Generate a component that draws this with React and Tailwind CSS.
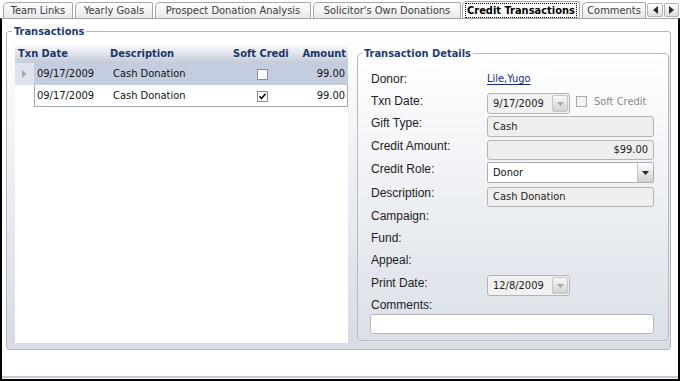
import React from "react";

const TAH = "font-['DejaVu_Sans_Condensed','DejaVu_Sans',sans-serif]";
const ARI = "font-['Liberation_Sans',Arial,sans-serif]";

function Tab({ cls, children }) {
  return (
    <div
      className={`${cls} h-[16px] border border-b-0 border-[#a7a7a7] rounded-tl-[5px] rounded-tr-[2px] bg-linear-to-b from-white to-[#e8e8e8] flex items-center justify-center text-[#3b3b3b] whitespace-nowrap leading-[13px]`}
    >
      {children}
    </div>
  );
}

function Tabs() {
  return (
    <div className="h-[18px] flex items-end">
      <Tab cls="ml-[3px] w-[70px]">Team Links</Tab>
      <Tab cls="ml-[2px] w-[78px]">Yearly Goals</Tab>
      <Tab cls="ml-[2px] w-[156px]">Prospect Donation Analysis</Tab>
      <Tab cls="ml-[2px] w-[148px]">Solicitor's Own Donations</Tab>
      <div className="ml-[1px] w-[118px] h-[17px] border border-b-0 border-[#a7a7a7] rounded-tl-[5px] rounded-tr-[2px] bg-white flex items-center justify-center">
        <span className="border border-dotted border-black px-[1px] leading-[13px] font-bold text-black whitespace-nowrap">
          Credit Transactions
        </span>
      </div>
      <Tab cls="ml-[2px] w-[64px]">Comments</Tab>
      <div className="ml-[1px] mb-[1px] w-[16px] h-[14px] border border-[#b3b3b3] rounded-[2px] bg-linear-to-b from-white to-[#dedede] flex items-center justify-center">
        <svg width="5" height="8" viewBox="0 0 5 8"><path d="M5 0 L0 4 L5 8 Z" fill="#2a2a2a" /></svg>
      </div>
      <div className="ml-[1px] mb-[1px] w-[15px] h-[14px] border border-[#b3b3b3] rounded-[2px] bg-linear-to-b from-white to-[#dedede] flex items-center justify-center">
        <svg width="5" height="8" viewBox="0 0 5 8"><path d="M0 0 L5 4 L0 8 Z" fill="#2a2a2a" /></svg>
      </div>
    </div>
  );
}

function CheckBox({ checked }) {
  return (
    <div className="w-[11px] h-[11px] border border-[#8d8d8d] bg-white flex items-center justify-center">
      {checked && (
        <svg width="9" height="9" viewBox="0 0 9 9">
          <path d="M1.5 4.2 L3.5 6.5 L7.5 1.8" fill="none" stroke="#111" strokeWidth="1.6" />
        </svg>
      )}
    </div>
  );
}

function Grid() {
  return (
    <div className="w-[333px] h-[298px] bg-white flex flex-col shrink-0">
      <div className="h-[18px] flex items-center bg-linear-to-b from-[#f8f9fb] to-[#c3cbd9] font-bold text-[#1d3566] whitespace-nowrap">
        <div className="w-[95px] pl-[3px]">Txn Date</div>
        <div className="w-[120px]">Description</div>
        <div className="w-[64px] pl-[3px] overflow-hidden">Soft Credi</div>
        <div className="flex-1 text-right pr-[2px]">Amount</div>
      </div>
      <div className="h-[22px] flex">
        <div className="w-[19px] bg-[#dfe3eb] flex items-center justify-center">
          <svg width="5" height="8" viewBox="0 0 5 8"><path d="M0 0 L4.5 4 L0 8 Z" fill="#a3aab4" /></svg>
        </div>
        <div className="flex-1 flex items-center bg-[#c4cde0] text-[#111]">
          <div className="w-[76px] pl-[3px]">09/17/2009</div>
          <div className="w-[120px] pl-[3px]">Cash Donation</div>
          <div className="w-[64px] flex justify-center"><CheckBox /></div>
          <div className="flex-1 text-right pr-[3px]">99.00</div>
        </div>
      </div>
      <div className="h-[22px] flex">
        <div className="w-[19px]" />
        <div className="flex-1 flex items-center text-[#111] shadow-[inset_1px_0_0_#a3a9b1,inset_-1px_0_0_#a3a9b1,inset_0_-1px_0_#a3a9b1]">
          <div className="w-[76px] pl-[3px]">09/17/2009</div>
          <div className="w-[120px] pl-[3px]">Cash Donation</div>
          <div className="w-[64px] flex justify-center"><CheckBox checked /></div>
          <div className="flex-1 text-right pr-[3px]">99.00</div>
        </div>
      </div>
    </div>
  );
}

function DateBox({ value }) {
  return (
    <div className={`w-[83px] h-[21px] border border-[#b4b4b4] rounded-[3px] bg-[#f1f1f1] flex items-center ${TAH} text-[11px] text-[#1b1b1b]`}>
      <div className="flex-1 pl-[5px]">{value}</div>
      <div className="w-[16px] h-[17px] mr-[1px] rounded-[2px] border border-[#c6c6c6] bg-linear-to-b from-[#f7f7f7] to-[#d2d2d2] flex items-center justify-center">
        <svg width="7" height="4" viewBox="0 0 7 4"><path d="M0 0 L7 0 L3.5 4 Z" fill="#a9a9a9" /></svg>
      </div>
    </div>
  );
}

function GreyBox({ children, right, h }) {
  return (
    <div className={`w-[167px] ${h} border border-[#b4b4b4] rounded-[3px] bg-[#efefef] flex items-center ${right ? "justify-end pr-[5px]" : "pl-[5px]"} ${TAH} text-[11px] text-[#1b1b1b]`}>
      {children}
    </div>
  );
}

function Details() {
  return (
    <fieldset className="ml-[9px] mt-[2px] w-[312px] h-[294px] min-w-0 border border-[#b6bbc3] rounded-[4px] bg-linear-to-b from-white to-[#dbe0e8] shadow-[1px_1px_0_#e4e7eb]">
      <legend className="ml-[4px] px-[2px] leading-[13px] font-bold text-[#1f3c72]">Transaction Details</legend>
      <div className={`pl-[13px] pt-[10px] flex flex-col ${ARI} text-[12px] leading-[14px] text-[#1c1c1c]`}>
        <div className="h-[23px] flex items-start">
          <div className="w-[116px] mt-[2px]">Donor:</div>
          <div className={`mt-[2px] ${TAH} text-[11px] text-[#1c2a80] underline underline-offset-[2px]`}>Lile,Yugo</div>
        </div>
        <div className="h-[23px] flex items-start">
          <div className="w-[116px] mt-[1px]">Txn Date:</div>
          <DateBox value="9/17/2009" />
          <div className="ml-[6px] mt-[3px] w-[11px] h-[11px] border border-[#a9a9a9] bg-[#f4f4f4]" />
          <div className={`ml-[7px] mt-[2px] ${TAH} text-[11px] text-[#8a8a8a]`}>Soft Credit</div>
        </div>
        <div className="h-[24px] flex items-start">
          <div className="w-[116px]">Gift Type:</div>
          <GreyBox h="h-[21px]">Cash</GreyBox>
        </div>
        <div className="h-[22px] flex items-start">
          <div className="w-[116px] -mt-[1px]">Credit Amount:</div>
          <GreyBox h="h-[20px]" right>$99.00</GreyBox>
        </div>
        <div className="h-[25px] flex items-start">
          <div className="w-[116px]">Credit Role:</div>
          <div className={`w-[167px] h-[21px] border border-[#abadb3] rounded-[2px] bg-white flex items-stretch ${TAH} text-[11px] text-[#111]`}>
            <div className="flex-1 flex items-center pl-[5px]">Donor</div>
            <div className="w-[16px] border-l border-[#c3c3c3] bg-linear-to-b from-white to-[#cfcfcf] flex items-center justify-center">
              <svg width="7" height="4" viewBox="0 0 7 4"><path d="M0 0 L7 0 L3.5 4 Z" fill="#222" /></svg>
            </div>
          </div>
        </div>
        <div className="h-[22px] flex items-start">
          <div className="w-[116px] -mt-[1px]">Description:</div>
          <GreyBox h="h-[20px]">Cash Donation</GreyBox>
        </div>
        <div className="h-[22px]">Campaign:</div>
        <div className="h-[22px]">Fund:</div>
        <div className="h-[22px]">Appeal:</div>
        <div className="h-[23px] flex items-start">
          <div className="w-[116px] mt-[1px]">Print Date:</div>
          <DateBox value="12/8/2009" />
        </div>
        <div className="h-[16px]">Comments:</div>
        <div className="-ml-[1px] w-[284px] h-[20px] border border-[#b5b5b5] rounded-[3px] bg-white" />
      </div>
    </fieldset>
  );
}

export default function App() {
  return (
    <div className={`w-[680px] h-[381px] bg-white flex flex-col overflow-hidden ${TAH} text-[11px] text-[#1b1b1b]`}>
      <Tabs />
      <div className="flex-1 flex flex-col border-x-2 border-b-2 border-black border-t border-t-[#a6a6a6] bg-white">
        <div className="pl-[4px] pt-[6px]">
          <fieldset className="w-[665px] h-[325px] min-w-0 border border-[#b3b8c0] rounded-[3px] bg-linear-to-b from-white to-[#d6dbe4]">
            <legend className="ml-[5px] px-[2px] leading-[13px] font-bold text-[#1f3c72]">Transactions</legend>
            <div className="flex items-start pl-[8px] pt-[7px]">
              <Grid />
              <Details />
            </div>
          </fieldset>
        </div>
        <div className="flex-1" />
        <div className="h-[2px] bg-[#c6cad0] mb-[1px]" />
      </div>
    </div>
  );
}
